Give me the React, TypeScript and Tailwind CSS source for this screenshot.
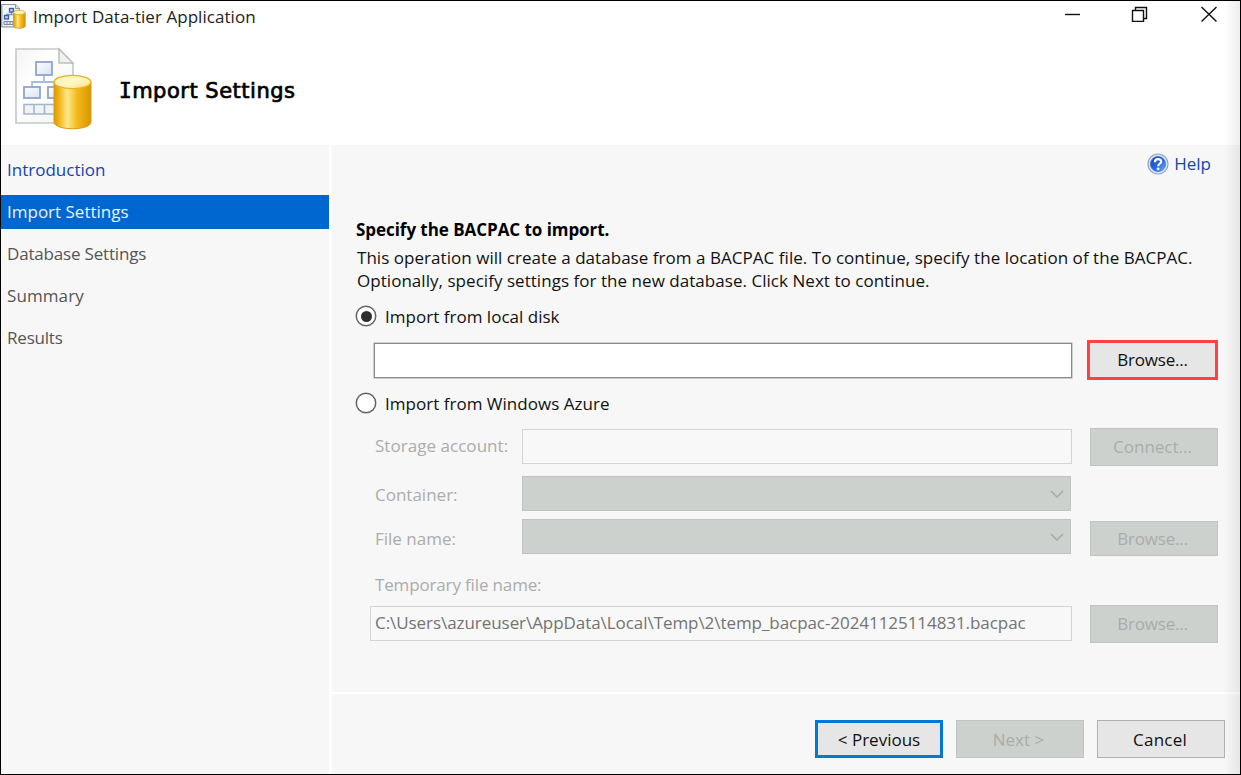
import type { ReactNode } from "react";

function DatabaseIcon({ className }: { className: string }) {
  return (
    <svg viewBox="0 0 80 84" className={className} aria-hidden="true">
      <defs>
        <linearGradient id="gold" x1="0" x2="1" y1="0" y2="0">
          <stop offset="0" stopColor="#d99a08" />
          <stop offset="0.12" stopColor="#efb010" />
          <stop offset="0.36" stopColor="#ffe88c" />
          <stop offset="0.62" stopColor="#f3b91c" />
          <stop offset="1" stopColor="#d79500" />
        </linearGradient>
        <linearGradient id="lid" x1="0" x2="1" y1="0" y2="1">
          <stop offset="0" stopColor="#fff0a8" />
          <stop offset="0.5" stopColor="#fff7c6" />
          <stop offset="1" stopColor="#ffe27a" />
        </linearGradient>
        <linearGradient id="sheet" x1="0" x2="1" y1="0" y2="1">
          <stop offset="0" stopColor="#f3f4f3" />
          <stop offset="0.35" stopColor="#ffffff" />
          <stop offset="1" stopColor="#f0f2f2" />
        </linearGradient>
        <linearGradient id="node" x1="0" x2="1" y1="0" y2="1">
          <stop offset="0" stopColor="#ffffff" />
          <stop offset="1" stopColor="#d5e2f4" />
        </linearGradient>
      </defs>
      <path d="M2 2H45L59 17V76H2Z" fill="url(#sheet)" stroke="#c6c8c8" strokeWidth="1.6" />
      <path d="M45 2V16H59Z" fill="#f1f1f1" stroke="#bcbebe" strokeWidth="1.5" />
      <path d="M30 28V35M18 41V35H44V41" fill="none" stroke="#a9bce0" strokeWidth="1.8" />
      <rect x="22" y="15" width="16" height="13" fill="url(#node)" stroke="#8fa4cc" strokeWidth="1.8" />
      <rect x="10" y="40" width="16" height="11" fill="url(#node)" stroke="#8fa4cc" strokeWidth="1.8" />
      <rect x="34" y="40" width="16" height="11" fill="url(#node)" stroke="#8fa4cc" strokeWidth="1.8" />
      <path d="M10 57.500H50V67H10ZM20 57.500V67M30.500 57.500V67" fill="#f0f3f7" stroke="#a9b5ca" strokeWidth="1.6" />
      <path d="M40 35V75C40 84 77 84 77 75V35Z" fill="url(#gold)" stroke="#d99c15" strokeWidth="1" />
      <ellipse cx="58.500" cy="35" rx="18.500" ry="6.600" fill="url(#lid)" stroke="#e9b220" strokeWidth="1.300" />
    </svg>
  );
}

function TitleIcon() {
  return (
    <svg viewBox="0 0 25 26" className="h-[26px] w-[25px]" aria-hidden="true">
      <path d="M0.800 1.500H14.500L18.500 5.500V23.800H0.800Z" fill="#f1f4f8" stroke="#8e99a6" strokeWidth="1.200" />
      <path d="M14.500 1.500V5.500H18.500" fill="#dfe3e8" stroke="#8e99a6" />
      <path d="M10.500 9V11.500M5.500 14V11.500H12" fill="none" stroke="#7f9bc9" strokeWidth="1.300" />
      <rect x="8.500" y="5.500" width="4" height="3.500" fill="#b7cdf0" stroke="#3f5f9f" strokeWidth="1.300" />
      <rect x="3.500" y="12.500" width="4" height="3.500" fill="#b7cdf0" stroke="#3f5f9f" strokeWidth="1.300" />
      <path d="M3 18.500H12V21.500H3ZM6 18.500V21.500M9 18.500V21.500" fill="#e3e9f2" stroke="#7888a5" />
      <path d="M12.500 9.500V23C12.500 26 24.200 26 24.200 23V9.500Z" fill="url(#gold)" stroke="#cf9512" strokeWidth="0.800" />
      <ellipse cx="18.350" cy="9.500" rx="5.850" ry="2.200" fill="url(#lid)" stroke="#e0aa20" strokeWidth="0.800" />
    </svg>
  );
}

function HelpIcon() {
  return (
    <svg viewBox="0 0 22 22" className="size-[22px]" aria-hidden="true">
      <defs>
        <linearGradient id="ball" x1="0" x2="1" y1="0" y2="1">
          <stop offset="0" stopColor="#1145b8" />
          <stop offset="0.55" stopColor="#2468e6" />
          <stop offset="1" stopColor="#7cbcff" />
        </linearGradient>
      </defs>
      <circle cx="11" cy="11" r="10" fill="#dbe5f4" stroke="#8ea5ce" strokeWidth="1.200" />
      <circle cx="11" cy="11" r="7.600" fill="url(#ball)" stroke="#4a70c0" strokeWidth="0.800" />
      <path d="M7.900 9.300C7.700 5.300 14.400 5.200 14.200 8.700C14.100 10.800 11.100 10.700 11.200 13.300" fill="none" stroke="#fff" strokeWidth="2.200" />
      <circle cx="11.100" cy="15.800" r="1.400" fill="#fff" />
    </svg>
  );
}

function Radio({ checked, children }: { checked?: boolean; children: ReactNode }) {
  return (
    <label className="flex h-[22px] items-center gap-[9px]">
      <span className="flex size-5 items-center justify-center rounded-full border-[1.5px] border-[#555] bg-white ring-[0.5px] ring-[#777]">
        {checked && <span className="size-[11px] rounded-full bg-[#2f2f2f]" />}
      </span>
      <span className="tracking-[0.02px]">{children}</span>
    </label>
  );
}

function DisabledButton({ className, children }: { className: string; children: ReactNode }) {
  return (
    <button
      disabled
      className={`flex w-32 shrink-0 items-center justify-center border border-[#c0c5c2] bg-[#cdd1ce] pr-[3px] text-[#a9acaa] ${className}`}
    >
      {children}
    </button>
  );
}

function DisabledSelect() {
  return (
    <div className="flex h-[35px] w-[549px] items-center justify-end border border-[#bec4c0] bg-[#cdd1ce] pr-[6px]">
      <svg viewBox="0 0 14 8" className="h-2 w-3.5" aria-hidden="true">
        <path d="M1 1L7 7L13 1" fill="none" stroke="#a6aaa7" strokeWidth="1.500" />
      </svg>
    </div>
  );
}

const steps = [
  { label: "Introduction", style: "text-[#1443b8]" },
  { label: "Import Settings", style: "bg-[#0067d0] text-[#e8f3ff]" },
  { label: "Database Settings", style: "text-[#555] tracking-[-0.18px]" },
  { label: "Summary", style: "text-[#555] tracking-[0.1px]" },
  { label: "Results", style: "text-[#555] tracking-[-0.2px]" },
];

export default function App() {
  return (
    <div className="relative flex h-[775px] w-[1241px] flex-col overflow-hidden border border-black bg-white font-['Open_Sans',sans-serif] text-[17px] leading-[23px] text-[#111]">
      <header className="flex h-[144px] shrink-0 flex-col">
        <div className="flex h-[30px] items-center">
          <TitleIcon />
          <h1 className="ml-[7px] flex-1 pt-px tracking-[0.05px] text-[#222]">Import Data-tier Application</h1>
          <svg viewBox="0 0 154 16" className="mr-[22px] mb-[4px] h-4 w-[154px]" fill="none" stroke="#111" strokeWidth="1.400" aria-hidden="true">
            <path d="M1 8.500H16" />
            <path d="M68.500 4.500H79.500V15.500H68.500ZM71.500 4.500V1.500H82.500V12.500H79.500" />
            <path d="M137.500 1L152.500 15.500M152.500 1L137.500 15.500" />
          </svg>
        </div>
        <div className="flex h-[114px] items-center">
          <DatabaseIcon className="mt-[1px] ml-[13px] h-[84px] w-20" />
          <h2 className="ml-[25px] pt-1.5 font-['DejaVu_Sans',sans-serif] text-[21px] tracking-[0.5px] text-black [-webkit-text-stroke:0.7px_black]">
            <span className="font-['DejaVu_Sans_Mono',monospace]">I</span>mport Settings
          </h2>
        </div>
      </header>

      <div className="flex flex-1 gap-[3px]">
        <nav className="flex w-[328px] shrink-0 flex-col gap-2 bg-[#f7f7f7] pt-2">
          {steps.map((step) => (
            <div key={step.label} className={`flex h-[34px] items-center pb-0.5 pl-[6px] ${step.style}`}>
              {step.label}
            </div>
          ))}
        </nav>

        <div className="flex flex-1 flex-col">
          <main className="flex h-[547px] flex-col bg-[#f7f7f7] pr-[22px] pl-6">
            <div className="flex h-[38px] items-center justify-end gap-[5px] pr-[7px] text-[#1443b8]">
              <HelpIcon />
              <span className="pb-0.5">Help</span>
            </div>
            <h3 className="mt-[35px] h-6 text-[17px] leading-6 font-bold tracking-[-0.05px] text-black">
              Specify the BACPAC to import.
            </h3>
            <p className="mt-[4px] pl-px whitespace-nowrap">
              <span className="tracking-[0.04px]">
                This operation will create a database from a BACPAC file. To continue, specify the location of the BACPAC.
              </span>
              <br />
              <span className="tracking-[0.04px]">Optionally, specify settings for the new database. Click Next to continue.</span>
            </p>

            <div className="mt-[13px]">
              <Radio checked>Import from local disk</Radio>
            </div>
            <div className="mt-[13px] flex h-10 items-center justify-between pl-[18px]">
              <div className="h-[35px] w-[698px] border-[1.5px] border-[#888b89] bg-white ring-[0.5px] ring-[#a5a7a6]" />
              <button className="flex h-10 w-[131px] items-center justify-center border-3 border-[#fc4242] bg-[#e6e6e6] pb-0.5 tracking-[-0.2px]">
                Browse...
              </button>
            </div>
            <div className="mt-3">
              <Radio>Import from Windows Azure</Radio>
            </div>

            <div className="mt-3.5 flex h-[38px] pl-[19px] text-[#acacac]">
              <span className="w-[147px] pt-[6px] tracking-[0.04px]">Storage account:</span>
              <div className="mt-px h-[35px] w-[550px] border border-[#d2d5d3] bg-[#f8f8f8]" />
              <DisabledButton className="ml-auto h-[38px] pb-0.5">Connect...</DisabledButton>
            </div>
            <div className="mt-2.5 flex h-[35px] pl-[19px] text-[#acacac]">
              <span className="w-[147px] pt-[7px]">Container:</span>
              <DisabledSelect />
            </div>
            <div className="mt-2 flex h-[37px] pl-[19px] text-[#acacac]">
              <span className="w-[147px] pt-[8px]">File name:</span>
              <DisabledSelect />
              <DisabledButton className="mt-0.5 ml-auto h-[35px] tracking-[-0.2px]">Browse...</DisabledButton>
            </div>
            <div className="mt-[17px] pl-[19px] tracking-[-0.15px] text-[#acacac]">Temporary file name:</div>
            <div className="mt-[9px] flex h-[38px] justify-between pl-[14px]">
              <div className="mt-px flex h-[35px] w-[702px] items-center border border-[#d2d5d3] bg-[#f8f8f8] pb-0.5 pl-1 tracking-[-0.06px] text-[#737373]">
                C:\Users\azureuser\AppData\Local\Temp\2\temp_bacpac-20241125114831.bacpac
              </div>
              <DisabledButton className="h-[38px] pb-0.5 tracking-[-0.2px]">Browse...</DisabledButton>
            </div>
          </main>

          <footer className="mt-0.5 flex flex-1 justify-end gap-[13px] bg-[#f7f7f7] pt-[26px] pr-[15px]">
            <button className="flex h-[38px] w-32 items-center justify-center border-3 border-[#0078d7] bg-[#e6e6e6]">
              &lt; Previous
            </button>
            <DisabledButton className="h-[38px]">Next &gt;</DisabledButton>
            <button className="flex h-[38px] w-32 items-center justify-center border border-[#b0b0b0] bg-[#e6e6e6] pr-[2px] tracking-[0.2px]">
              Cancel
            </button>
          </footer>
        </div>
      </div>
      <div className="pointer-events-none absolute inset-y-0 right-0 w-4 bg-linear-to-r from-transparent to-black/7" />
    </div>
  );
}
